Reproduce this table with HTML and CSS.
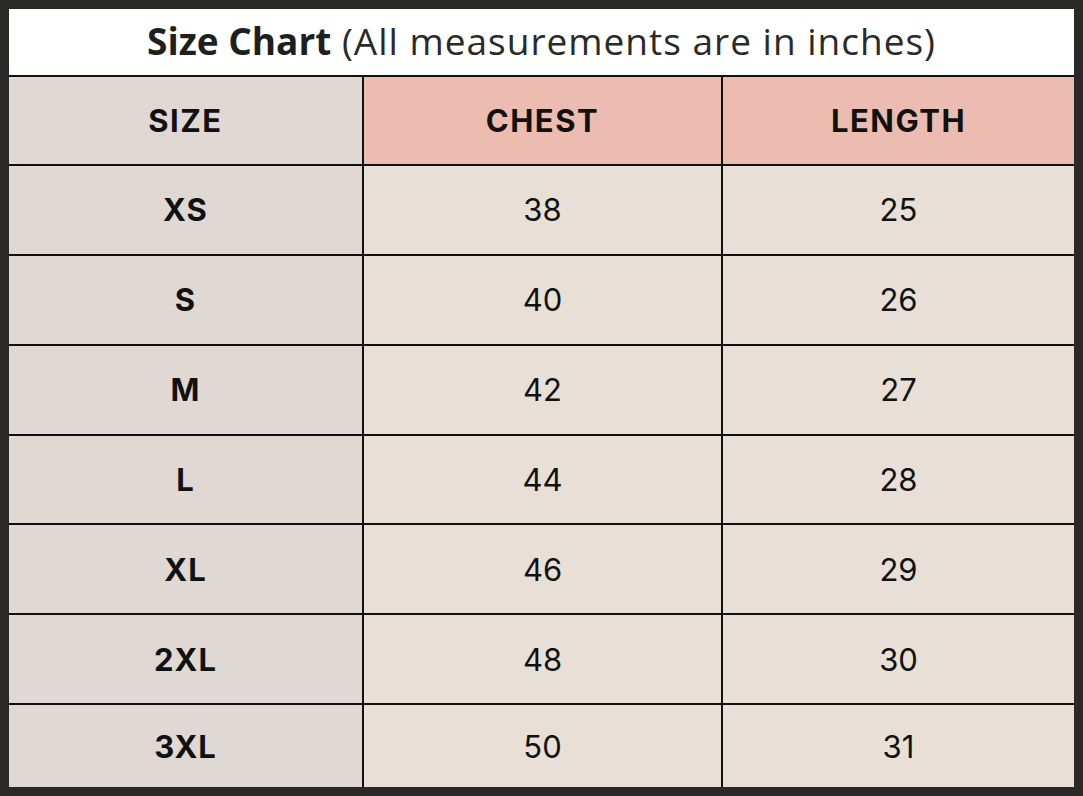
FILE: index.html
```html
<!DOCTYPE html>
<html>
<head>
<meta charset="utf-8">
<link rel="stylesheet" href="styles.css">
</head>
<body>
<div class="frame">
  <div class="title"><b>Size Chart</b> (All measurements are in inches)</div>
  <div class="chart">
    <div class="cell size head">SIZE</div>
    <div class="cell pink head">CHEST</div>
    <div class="cell pink head">LENGTH</div>

    <div class="cell size">XS</div><div class="cell val">38</div><div class="cell val">25</div>
    <div class="cell size">S</div><div class="cell val">40</div><div class="cell val">26</div>
    <div class="cell size">M</div><div class="cell val">42</div><div class="cell val">27</div>
    <div class="cell size">L</div><div class="cell val">44</div><div class="cell val">28</div>
    <div class="cell size">XL</div><div class="cell val">46</div><div class="cell val">29</div>
    <div class="cell size">2XL</div><div class="cell val">48</div><div class="cell val">30</div>
    <div class="cell size">3XL</div><div class="cell val">50</div><div class="cell val">31</div>
  </div>
</div>
</body>
</html>
```

FILE: styles.css
```css
html, body {
  margin: 0;
  padding: 0;
  background: #2a2927;
}
.frame {
  width: 1065px;
  height: 778px;
  padding: 9px;
  display: flex;
  flex-direction: column;
}
.title {
  height: 68px;
  background: #ffffff;
  border-bottom: 2px solid #111;
  display: flex;
  align-items: center;
  justify-content: center;
  font-family: "Open Sans", "Noto Sans", sans-serif;
  font-size: 37px;
  color: #2a2a2a;
  letter-spacing: 1px;
  white-space: pre;
  padding-bottom: 4px;
  box-sizing: border-box;
}
.title b {
  font-weight: 700;
  color: #1f1f1f;
  letter-spacing: 0;
}
.chart {
  flex: 1;
  display: grid;
  grid-template-columns: 353px 357px 1fr;
  grid-template-rows: 87px repeat(6, 1fr) 82px;
  gap: 2px;
  background: #111;
}
.cell {
  display: flex;
  align-items: center;
  justify-content: center;
  font-family: Inter, "Liberation Sans", Arial, sans-serif;
  font-size: 31px;
  color: #111;
}
.size {
  background: #dfd8d3;
  font-weight: 700;
  letter-spacing: 1px;
}
.pink {
  background: #ecbcb0;
  font-weight: 700;
}
.head {
  letter-spacing: 1.5px;
}
.val {
  background: #e8e0d6;
}
```
